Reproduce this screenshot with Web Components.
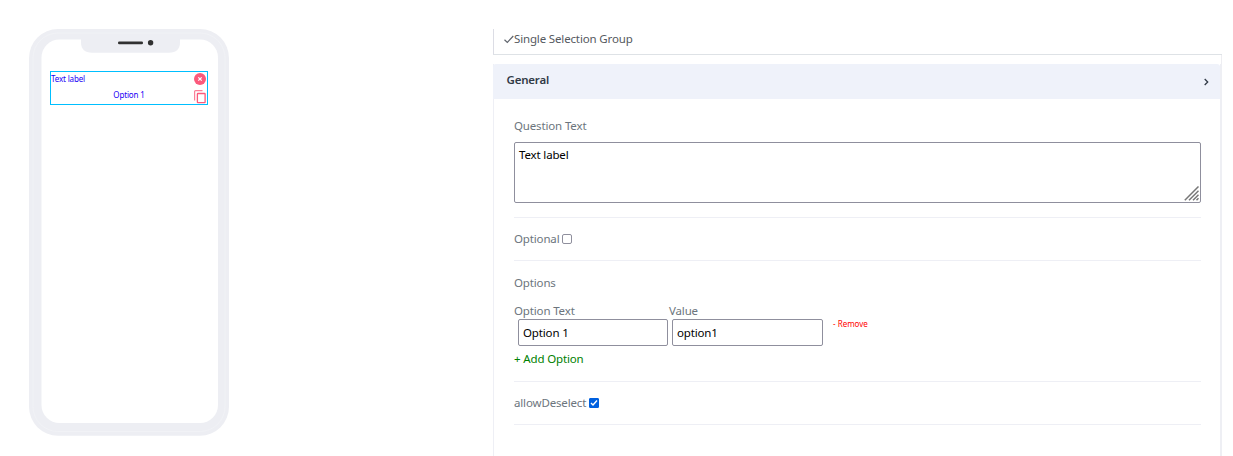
<!DOCTYPE html>
<html lang="en"><head><meta charset="utf-8"><title>Form builder</title>
<style>
html,body{margin:0;background:#fff;height:456px;overflow:hidden}
body{font:11.5px/16px "Noto Sans",sans-serif;letter-spacing:-.15px;color:#6c757d}
</style></head><body>
<form-builder></form-builder>
<script>
function define(name, html){
  const t=document.createElement('template');t.innerHTML=html;
  customElements.define(name,class extends HTMLElement{
    constructor(){super();this.attachShadow({mode:'open'}).append(t.content.cloneNode(true));}
  });
}
define('close-icon',`<style>:host{display:block;width:12px;height:12px}svg{display:block}</style>
<svg width="12" height="12" viewBox="0 0 12 12"><circle cx="6" cy="6" r="6" fill="#fb5a7c"/><path d="M4.3 4.3l3.4 3.4M7.7 4.3L4.3 7.7" stroke="#fff" stroke-width="1.2"/></svg>`);
define('copy-icon',`<style>:host{display:block;width:12px;height:14px}svg{display:block}</style>
<svg width="12" height="14" viewBox="0 0 12 14" fill="none"><path d="M.6 10.5V1.6Q.6.6 1.6.6H8.5" stroke="#fb7f98" stroke-width="1.2"/><rect x="3.4" y="3.5" width="7.7" height="9.2" rx=".5" stroke="#fb5a7c" stroke-width="1.3"/></svg>`);
define('question-preview',`<style>:host{display:grid;grid-template-columns:1fr 12px;box-sizing:border-box;width:158px;height:34px;border:1px solid #00bfff;padding:0 1px 0 0;color:#1a00f5;font-size:8px;line-height:16px}
.t{display:flex;flex-direction:column;margin-top:-1px}.t ::slotted([slot=option]){align-self:center;margin-left:13px}.i{display:flex;flex-direction:column;gap:5px;padding-top:1px}</style>
<div class="t"><slot></slot><slot name="option"></slot></div><div class="i"><close-icon></close-icon><copy-icon></copy-icon></div>`);
define('phone-frame',`<style>:host{display:grid;width:200px;height:407px}svg,.screen{grid-area:1/1}.screen{padding:42px 0 0 21px}</style>
<svg width="200" height="407" viewBox="0 0 200 407"><rect width="200" height="406.7" rx="29" fill="#edeef3"/><rect x="4" y="4" width="192" height="398.5" rx="25" fill="none" stroke="#f2f3f6" stroke-width=".7"/><rect x="12.5" y="10.5" width="176.5" height="383.5" rx="18" fill="#fff"/><path d="M52 10V13Q52 23.7 63 23.7H140Q151 23.7 151 13V10Z" fill="#edeef3"/><rect x="89" y="12.5" width="25" height="2.7" rx="1.3" fill="#303030"/><circle cx="121.6" cy="13.7" r="2.7" fill="#303030"/></svg>
<div class="screen"><slot></slot></div>`);
define('section-header',`<style>:host{display:flex;justify-content:space-between;box-sizing:border-box;height:35px;background:#eff2fa;border-radius:3px 3px 0 0;padding:8px 11px 0 13.5px;color:#313a46;font-weight:600;letter-spacing:-.2px}svg{margin-top:6px}</style>
<slot></slot><svg width="5" height="8" viewBox="0 0 5 8"><path d="M.7 1l3 3-3 3" fill="none" stroke="#313a46" stroke-width="1.3"/></svg>`);
define('text-box',`<style>:host{display:block;box-sizing:border-box;border:1px solid #8f8f9d;border-radius:2px;background:#fff;color:#000;padding:5px 4px}
:host([area]){height:61px;display:flex;justify-content:space-between;padding:4px 1px 1px 4px}svg{display:none}:host([area]) svg{display:block;align-self:flex-end}</style>
<slot></slot><svg width="15" height="15" viewBox="0 0 15 15"><path d="M.8 14.2L14.5 .5M5 14.2l9.5-9.5M9 14.2l5.5-5.5M12.5 14.2l2-2" stroke="#777" stroke-width="1.5"/></svg>`);
define('check-box',`<style>:host{display:block;box-sizing:border-box;width:10px;height:10px;border:1px solid #8f8f9d;border-radius:2px;background:#fff}:host([checked]){background:#0060df;border-color:#0060df;border-radius:1px}svg{display:none}:host([checked]) svg{display:block}</style>
<svg width="8" height="8" viewBox="0 0 8 8"><path d="M1 4l2 2 4-4.5" stroke="#fff" stroke-width="1.4" fill="none"/></svg>`);
define('option-editor',`<style>:host{display:block;height:98px}.row{display:flex}.heads{margin-top:12px}.heads span:first-child{width:155px}.boxes{margin:0 0 0 4px;gap:4px}.a{width:150px;height:27px}.b{width:151px;height:27px}.remove{font-size:8px;line-height:10px;letter-spacing:0;color:red;margin:0 0 0 6px}.add{color:#008000;margin-top:5px}</style>
<div>Options</div><div class="row heads"><span>Option Text</span><span>Value</span></div>
<div class="row boxes"><text-box class="a">Option 1</text-box><text-box class="b">option1</text-box><span class="remove">- Remove</span></div><div class="add">+ Add Option</div>`);
define('property-panel',`<style>:host{display:block;width:729px;height:427px}.type{box-sizing:border-box;display:flex;height:26px;border-bottom:1px solid #dee2e6;border-left:1px solid #dcdde5;padding:2px 0 0 10px;color:#555960}.type svg{margin-top:4px}.gap{height:9px;border-right:1px solid #eeeef2}.body{height:392px;box-sizing:border-box;border-left:1px solid #eeeff5;border-right:2px solid #eeeff4}section-header{margin-left:-1px}.c{padding:19px 19px 0 20px}
.q{height:99px;border-bottom:1px solid #eeeff5}.q text-box{margin-top:8px}.check{height:42px;display:flex;align-items:center;gap:3px;border-bottom:1px solid #eeeff5}.o{padding-top:14px;height:106px;border-bottom:1px solid #eeeff5}</style>
<div class="type"><svg width="10" height="9" viewBox="0 0 10 9"><path d="M.5 4.7l2.8 2.7L9.3 1" fill="none" stroke="#60656d" stroke-width="1.2"/></svg><span>Single Selection Group</span></div><div class="gap"></div>
<div class="body"><section-header>General</section-header><div class="c"><div class="q"><div>Question Text</div><text-box area>Text label</text-box></div><div class="check"><span>Optional</span><check-box></check-box></div><div class="o"><option-editor></option-editor></div><div class="check"><span>allowDeselect</span><check-box checked></check-box></div></div></div>`);
define('form-builder',`<style>:host{display:flex;box-sizing:border-box;height:456px;padding:29px 0 0 29px;gap:264px}phone-frame,property-panel{flex:none}</style>
<phone-frame><question-preview><span>Text label</span><span slot="option">Option 1</span></question-preview></phone-frame><property-panel></property-panel>`);
</script></body></html>
